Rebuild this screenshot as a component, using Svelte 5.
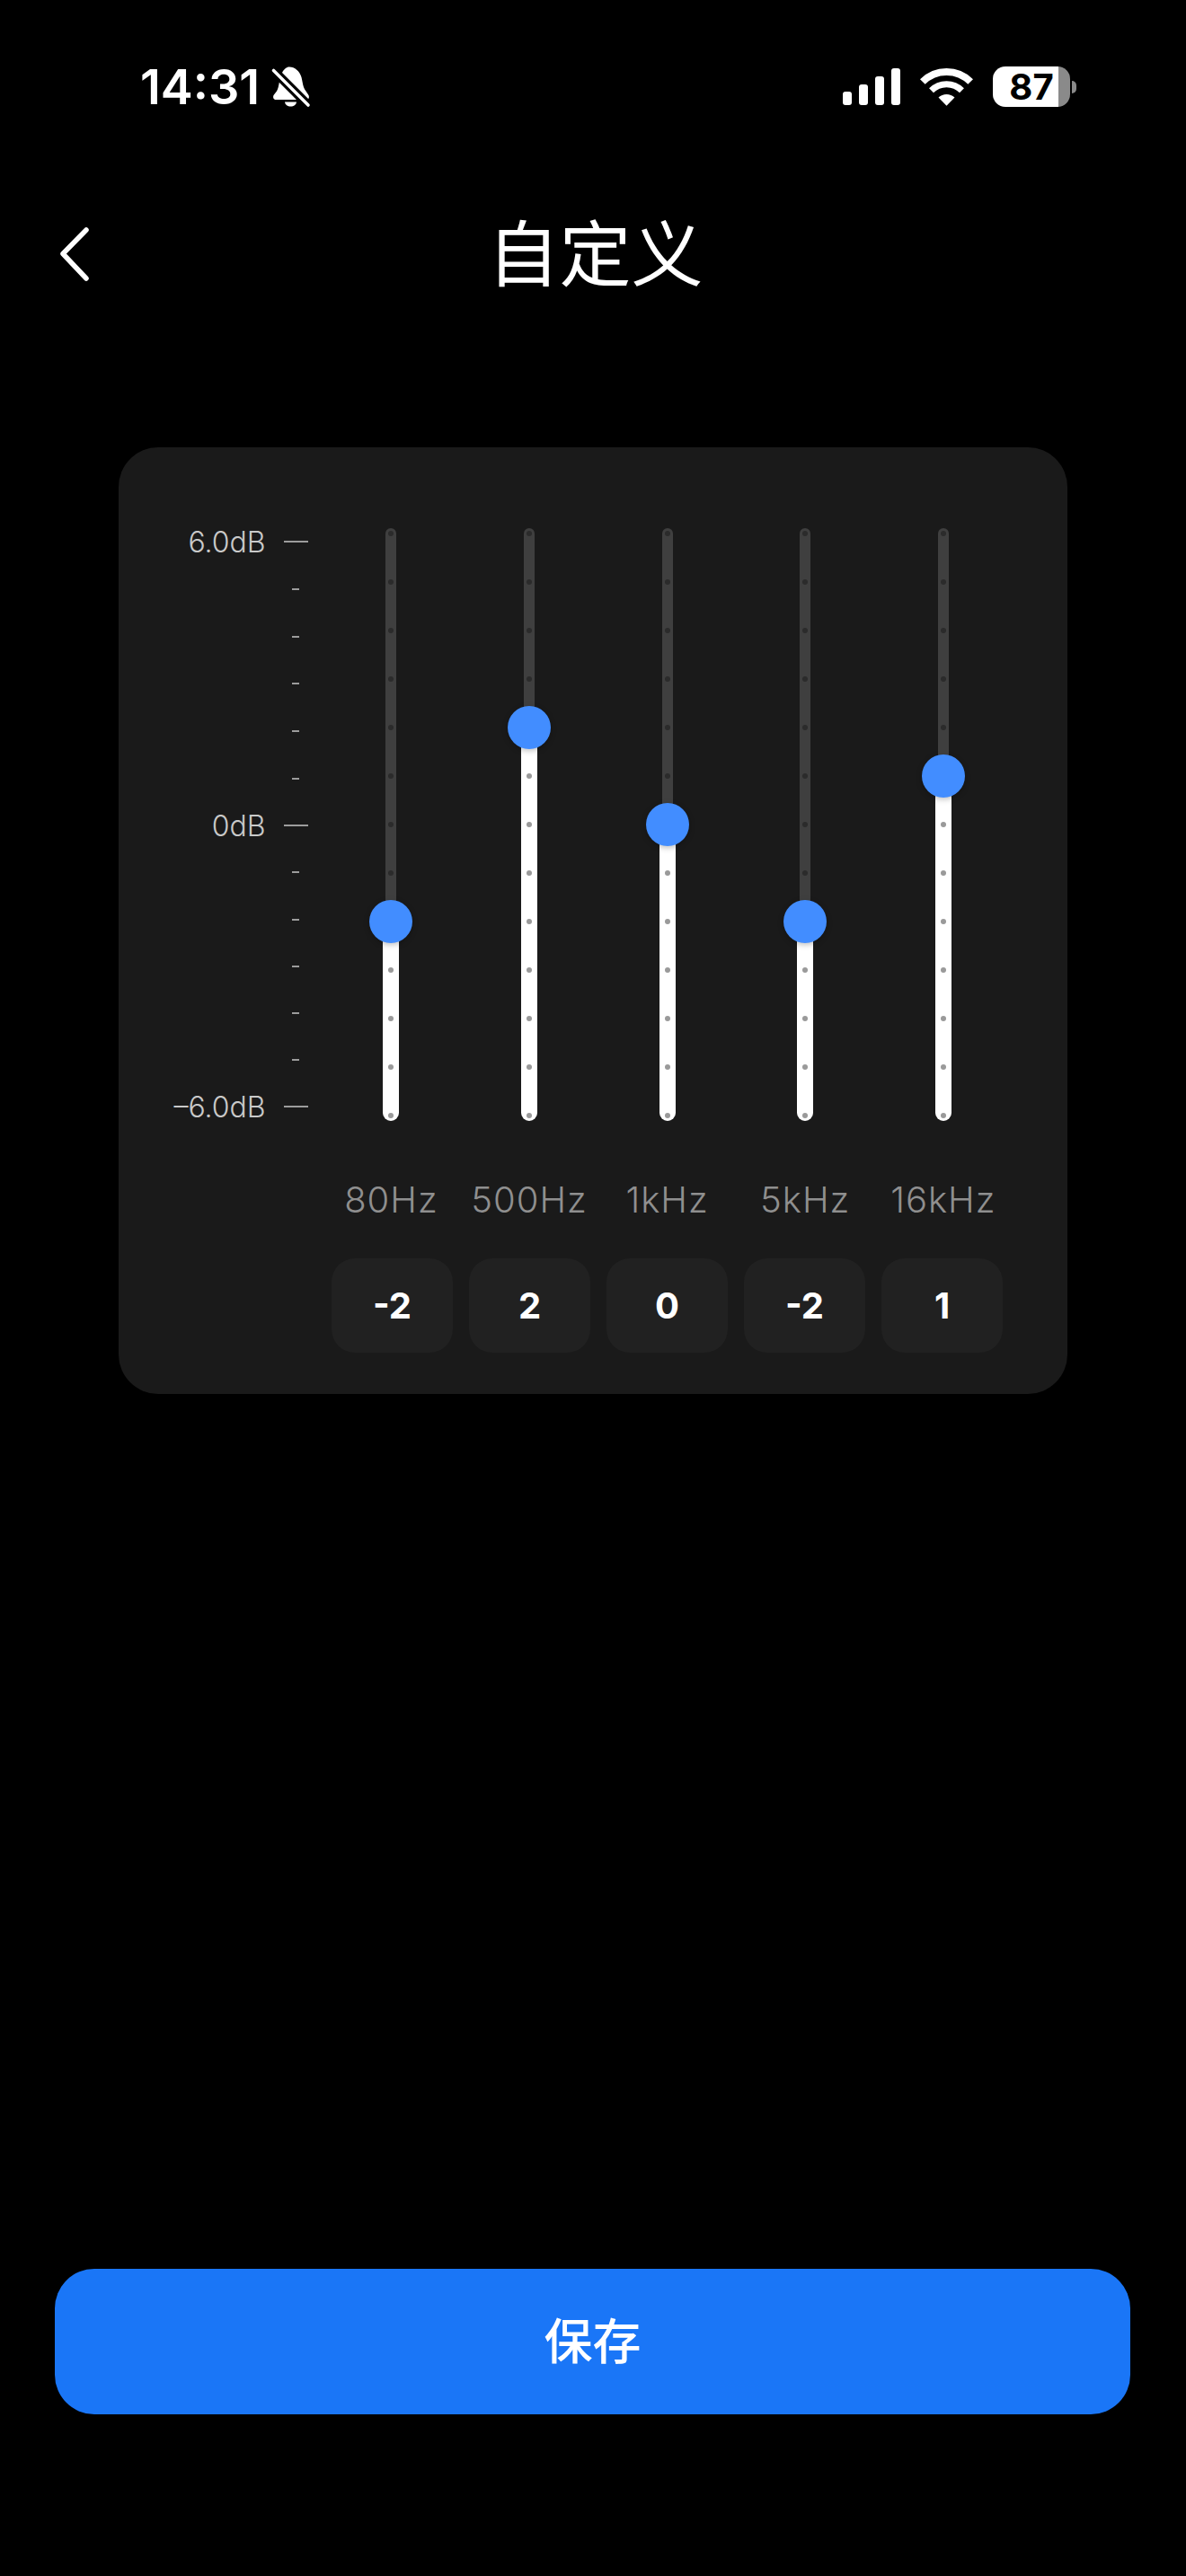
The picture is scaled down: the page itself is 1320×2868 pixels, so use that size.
<script>
  const bands = [
    { label: '80Hz', value: -2 },
    { label: '500Hz', value: 2 },
    { label: '1kHz', value: 0 },
    { label: '5kHz', value: -2 },
    { label: '16kHz', value: 1 }
  ];

  // 13 stops on each track, 54px apart; 0dB is the middle one
  const stops = [...Array(13).keys()];
  const stopOf = (value) => 6 - value;
  const thumbY = (value) => 6 + 54 * stopOf(value);

  const ticks = [
    { text: '6.0dB', major: true },
    {}, {}, {}, {}, {},
    { text: '0dB', major: true },
    { lower: true }, { lower: true }, { lower: true }, { lower: true }, { lower: true },
    { text: '–6.0dB', major: true, lower: true }
  ];

  const signal = [15, 23, 32, 41];
</script>

<div class="page">
  <div class="status">
    <div class="status-left">
      <span class="time">14:31</span>
      <svg class="bell" viewBox="0 0 46 48" width="46" height="48">
        <path d="M21 1.500C27 1.500 32.500 6 34.500 13C36 19 36 24 39.500 28.500L42.500 33C43.500 35.500 42.500 38 40 38H6C3.500 38 2.500 35.500 3.500 33L7 28.500C10 24 9.500 14 13 8C15 4 18 1.500 21 1.500Z" fill="#fff"/>
        <path d="M16 40.500H29C28.500 44 26 45.500 22.500 45.500C19 45.500 16.500 44 16 40.500Z" fill="#fff"/>
        <path d="M3 5L42 44" stroke="#000" stroke-width="10"/>
        <path d="M3.500 5.500L42 44" stroke="#fff" stroke-width="3.600" stroke-linecap="round"/>
      </svg>
    </div>
    <div class="status-right">
      <div class="signal">
        {#each signal as h}
          <i style="height: {h}px"></i>
        {/each}
      </div>
      <svg class="wifi" viewBox="0 0 60 44" width="60" height="44">
        <path d="M2.840 16.040A37.700 37.700 0 0 1 56.160 16.040" fill="none" stroke="#fff" stroke-width="8"/>
        <path d="M12.530 25.730A24 24 0 0 1 46.470 25.730" fill="none" stroke="#fff" stroke-width="7"/>
        <path d="M29.500 42.700L20.500 33.500A13 13 0 0 1 38.500 33.500Z" fill="#fff"/>
      </svg>
      <div class="battery"><span>87</span></div>
      <div class="battery-tip"></div>
    </div>
  </div>

  <div class="nav">
    <svg class="back" viewBox="0 0 34 60" width="34" height="60">
      <path d="M30 3L4 29.500L30 57" fill="none" stroke="#fff" stroke-width="5.500" stroke-linecap="round" stroke-linejoin="round"/>
    </svg>
    <h1>自定义</h1>
  </div>

  <div class="card">
    <div class="eq">
      <div class="scale">
        {#each ticks as tick}
          <div class="tick" class:lower={tick.lower}>
            {#if tick.text}<span class="tick-label">{tick.text}</span>{/if}
            <div class="mark-box"><div class="mark" class:major={tick.major}></div></div>
          </div>
        {/each}
      </div>
      {#each bands as band}
        <div class="slider">
          <div class="track">
            <div class="fill" style="top: {thumbY(band.value)}px"></div>
            <div class="dots">
              {#each stops as stop}
                <div class="dot" class:on={stop > stopOf(band.value)}></div>
              {/each}
            </div>
            <div class="thumb" style="top: {thumbY(band.value) - 24}px"></div>
          </div>
        </div>
      {/each}
    </div>

    <div class="labels">
      {#each bands as band}
        <span>{band.label}</span>
      {/each}
    </div>

    <div class="values">
      {#each bands as band}
        <div class="value">{band.value}</div>
      {/each}
    </div>
  </div>

  <button class="save">保存</button>
</div>

<style>
  :global(body) {
    background: #000;
  }

  .page {
    width: 1320px;
    height: 2868px;
    display: flex;
    flex-direction: column;
    background: #000;
    color: #fff;
    font-family: Inter, "Noto Sans CJK SC", sans-serif;
  }

  .status {
    display: flex;
    justify-content: space-between;
    align-items: center;
    height: 45px;
    margin-top: 74px;
    padding: 0 122px 0 156px;
  }

  .status-left,
  .status-right {
    display: flex;
    align-items: center;
  }

  .time {
    font-size: 54px;
    font-weight: 600;
    line-height: 45px;
  }

  .bell {
    margin-left: 12px;
  }

  .signal {
    display: flex;
    align-items: flex-end;
    gap: 7.500px;
    height: 41px;
  }

  .signal i {
    display: block;
    width: 10.500px;
    background: #fff;
    border-radius: 3px;
  }

  .wifi {
    margin-left: 22px;
  }

  .battery {
    width: 86px;
    height: 45px;
    margin-left: 21px;
    border-radius: 14px;
    background: linear-gradient(90deg, #fff 85%, #8a8a8a 85%);
    color: #000;
    font-size: 40px;
    font-weight: 700;
    line-height: 45px;
    text-align: center;
  }

  .battery-tip {
    width: 5px;
    height: 14px;
    margin-left: 2px;
    border-radius: 0 7px 7px 0;
    background: #8a8a8a;
  }

  .nav {
    display: flex;
    align-items: center;
    height: 130px;
    margin-top: 99px;
    padding-left: 66px;
    position: relative;
  }

  .nav h1 {
    margin: 0 0 0 5px;
    position: absolute;
    left: 0;
    right: 0;
    text-align: center;
    font-size: 80px;
    font-weight: 400;
    line-height: 126px;
  }

  .card {
    margin: 150px 132px 0;
    padding: 90px 0 46px;
    background: #1a1a1a;
    border-radius: 44px;
  }

  .eq {
    display: flex;
  }

  .scale {
    width: 226.600px;
    padding: 14.300px 16px 0 0;
    box-sizing: border-box;
    flex-shrink: 0;
  }

  .tick {
    display: flex;
    justify-content: flex-end;
    align-items: center;
    height: 2px;
  }

  .tick + .tick {
    margin-top: 50.670px;
  }

  .tick.lower + .tick.lower,
  .tick + .tick.lower {
    margin-top: 50.200px;
  }

  .tick-label {
    margin-right: 20px;
    color: #c9c9c9;
    font-size: 32px;
    font-weight: 300;
    white-space: nowrap;
  }

  .mark-box {
    display: flex;
    justify-content: center;
    width: 27px;
  }

  .mark {
    width: 8px;
    height: 2px;
    background: #9c9c9c;
  }

  .mark.major {
    width: 27px;
  }

  .slider {
    display: flex;
    justify-content: center;
    width: 153.600px;
  }

  .track {
    position: relative;
    width: 12px;
    height: 660px;
    border-radius: 6px;
    background: #3f3f3f;
  }

  .fill {
    position: absolute;
    left: -3px;
    right: -3px;
    bottom: 0;
    border-radius: 0 0 9px 9px;
    background: #fff;
  }

  .dots {
    position: absolute;
    inset: 3px 3px;
    display: flex;
    flex-direction: column;
    justify-content: space-between;
  }

  .dot {
    width: 6px;
    height: 6px;
    border-radius: 50%;
    background: #2b2b2b;
  }

  .dot.on {
    background: #9a9a9a;
  }

  .thumb {
    position: absolute;
    left: -18px;
    width: 48px;
    height: 48px;
    border-radius: 50%;
    background: #428dff;
    box-shadow: 0 2px 6px rgba(0, 0, 0, 0.25);
  }

  .labels {
    display: flex;
    margin-top: 64px;
    padding-left: 226.600px;
    color: #8f8f8f;
    font-size: 40px;
    font-weight: 300;
    letter-spacing: 1px;
    line-height: 48px;
  }

  .labels span {
    width: 153.600px;
    text-align: center;
  }

  .values {
    display: flex;
    gap: 18px;
    margin: 41px 0 0 237px;
  }

  .value {
    width: 135px;
    height: 105px;
    border-radius: 26px;
    background: #212121;
    font-size: 40px;
    font-weight: 700;
    line-height: 105px;
    text-align: center;
  }

  .save {
    margin: auto 62px 180px 61px;
    height: 162px;
    padding: 0 0 8px;
    border: none;
    border-radius: 44px;
    background: #1a76f7;
    color: #fff;
    font-family: Inter, "Noto Sans CJK SC", sans-serif;
    font-size: 54px;
    font-weight: 500;
  }
</style>
